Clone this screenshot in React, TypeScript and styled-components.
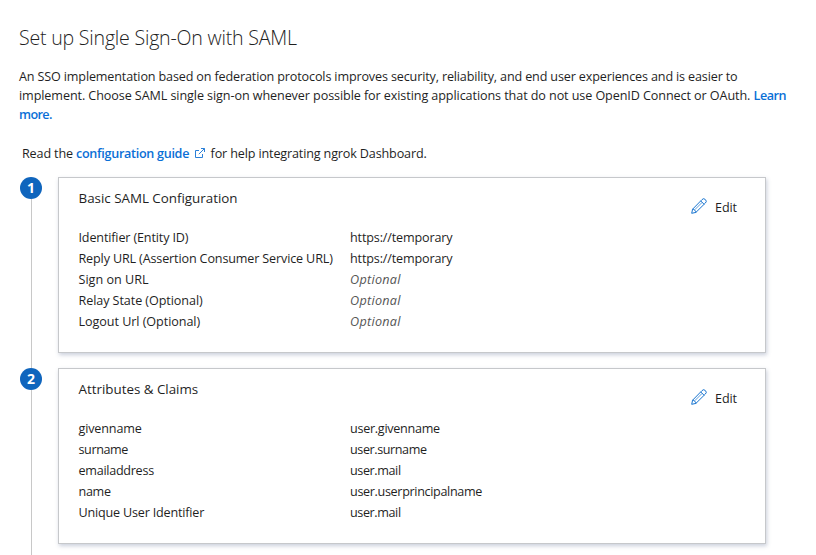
import React from 'react';
import styled, { createGlobalStyle } from 'styled-components';

const GlobalStyle = createGlobalStyle`
  * { box-sizing: border-box; }
  body {
    margin: 0;
    background: #fff;
    color: #1f1f1f;
    font: 12.6px/19px "Open Sans", "Noto Sans", sans-serif;
    letter-spacing: -0.15px;
    overflow: hidden;
  }
`;

const Page = styled.main`
  width: 816px;
  height: 555px;
  padding: 22px 20px 0 19px;
  overflow: hidden;
  display: flex;
  flex-direction: column;
`;

const Title = styled.h1`
  margin: 0 0 15px;
  font-size: 19.6px;
  line-height: 31px;
  height: 30px;
  font-weight: 300;
  letter-spacing: -0.22px;
  white-space: nowrap;
`;

const Text = styled.span<{ $spacing?: number }>`
  letter-spacing: ${({ $spacing = -0.15 }) => $spacing}px;
`;

const Intro = styled.p`
  margin: 0;
  white-space: nowrap;
`;

const Link = styled.a<{ $spacing?: number }>`
  color: #0a6fd6;
  font-weight: 600;
  text-decoration: none;
  letter-spacing: ${({ $spacing = -0.3 }) => $spacing}px;
`;

const Guide = styled.p`
  display: flex;
  margin: 20px 0 14px 3px;
  white-space: pre;
`;

const ExternalIcon = styled.svg`
  width: 10px;
  height: 10px;
  margin: 4px 6px 0 5.5px;
`;

const Step = styled.section`
  display: grid;
  grid-template-columns: 24px 708px;
  column-gap: 15px;
  height: 191px;
  flex: none;
`;

const Rail = styled.div`
  display: flex;
  flex-direction: column;
  align-items: center;
  &::after {
    content: '';
    width: 1px;
    flex: 1;
    background: #c8c8c8;
  }
`;

const Badge = styled.div`
  width: 22px;
  height: 22px;
  border-radius: 50%;
  background: #0f65bd;
  color: #fff;
  font-size: 14px;
  font-weight: 700;
  line-height: 22px;
  text-align: center;
`;

const Card = styled.div`
  height: 176px;
  padding: 10px 28px 0 19.5px;
  border: 1px solid #c6c8cb;
  box-shadow: 1px 2px 4px rgba(70, 85, 130, 0.28);
`;

const CardHeader = styled.header`
  display: flex;
  justify-content: space-between;
  height: 39px;
`;

const CardTitle = styled.h2`
  margin: 0;
  font-size: 13.4px;
  font-weight: 400;
  letter-spacing: -0.02px;
  line-height: 20px;
`;

const EditButton = styled.button`
  display: flex;
  align-items: flex-start;
  gap: 8px;
  height: 19px;
  margin-top: 10px;
  padding: 0;
  border: 0;
  background: none;
  color: inherit;
  font: inherit;
  letter-spacing: -0.1px;
`;

const Pencil = styled.svg`
  width: 16px;
  height: 16px;
`;

const Fields = styled.dl`
  display: grid;
  grid-template-columns: 271.5px 1fr;
  grid-auto-rows: 21px;
  margin: 0;
  line-height: 21px;
  white-space: nowrap;
`;

const Term = styled.dt<{ $spacing?: number }>`
  letter-spacing: ${({ $spacing = -0.15 }) => $spacing}px;
`;

const Value = styled.dd<{ $optional?: boolean; $spacing?: number }>`
  margin: 0;
  color: ${({ $optional }) => ($optional ? '#555' : 'inherit')};
  font-style: ${({ $optional }) => ($optional ? 'italic' : 'normal')};
  letter-spacing: ${({ $optional, $spacing = -0.15 }) => ($optional ? 0.3 : $spacing)}px;
`;

interface Field {
  term: string;
  value: string;
  optional?: boolean;
  termSpacing?: number;
  valueSpacing?: number;
}

interface StepData {
  title: string;
  fields: Field[];
}

const steps: StepData[] = [
  {
    title: 'Basic SAML Configuration',
    fields: [
      { term: 'Identifier (Entity ID)', value: 'https://temporary' },
      { term: 'Reply URL (Assertion Consumer Service URL)', value: 'https://temporary' },
      { term: 'Sign on URL', value: 'Optional', optional: true, termSpacing: 0 },
      { term: 'Relay State (Optional)', value: 'Optional', optional: true, termSpacing: -0.08 },
      { term: 'Logout Url (Optional)', value: 'Optional', optional: true, termSpacing: -0.06 },
    ],
  },
  {
    title: 'Attributes & Claims',
    fields: [
      { term: 'givenname', value: 'user.givenname', valueSpacing: -0.28 },
      { term: 'surname', value: 'user.surname', termSpacing: -0.4, valueSpacing: -0.42 },
      { term: 'emailaddress', value: 'user.mail', termSpacing: -0.28, valueSpacing: -0.4 },
      { term: 'name', value: 'user.userprincipalname', termSpacing: -0.3, valueSpacing: -0.34 },
      { term: 'Unique User Identifier', value: 'user.mail', termSpacing: -0.19, valueSpacing: -0.4 },
    ],
  },
];

const PencilIcon = () => (
  <Pencil viewBox="0 0 16 16" fill="none" stroke="#1673cf" strokeWidth="1" strokeLinejoin="round">
    <path d="M.7 15.3l.9-4.1L11 1.6a2.3 2.3 0 0 1 3.4 0 2.3 2.3 0 0 1 0 3.4L4.9 14.4z" />
    <path d="M9.7 2.9l3.4 3.4M1.6 11.2c1.7.1 3.1 1.5 3.3 3.2" />
    <path d="M3.8 11.7l7.3-7.3" strokeWidth=".7" />
  </Pencil>
);

export default function App() {
  return (
    <>
      <GlobalStyle />
      <Page>
        <Title>Set up Single Sign-On with SAML</Title>
        <Intro>
          <Text>An SSO implementation based on federation protocols improves security, reliability, and end user experiences and is easier to</Text>
          <br />
          <Text $spacing={-0.09}>implement. Choose SAML single sign-on whenever possible for existing applications that do not use OpenID Connect or OAuth. </Text>
          <Link $spacing={-0.45}>Learn</Link>
          <br />
          <Link $spacing={-0.6}>more.</Link>
        </Intro>
        <Guide>
          <Text>Read the </Text>
          <Link>configuration guide</Link>
          <ExternalIcon viewBox="0 0 10 10" fill="none" stroke="#2b80d8">
            <path d="M4 2.5H.5v7h7V6M6 .5h3.5V4M9.5.5L3.8 6.2" />
          </ExternalIcon>
          <Text>for help integrating ngrok Dashboard.</Text>
        </Guide>
        {steps.map((step, i) => (
          <Step key={step.title}>
            <Rail>
              <Badge>{i + 1}</Badge>
            </Rail>
            <Card>
              <CardHeader>
                <CardTitle>{step.title}</CardTitle>
                <EditButton type="button">
                  <PencilIcon />
                  Edit
                </EditButton>
              </CardHeader>
              <Fields>
                {step.fields.map((f) => (
                  <React.Fragment key={f.term}>
                    <Term $spacing={f.termSpacing}>{f.term}</Term>
                    <Value $optional={f.optional} $spacing={f.valueSpacing}>{f.value}</Value>
                  </React.Fragment>
                ))}
              </Fields>
            </Card>
          </Step>
        ))}
      </Page>
    </>
  );
}
